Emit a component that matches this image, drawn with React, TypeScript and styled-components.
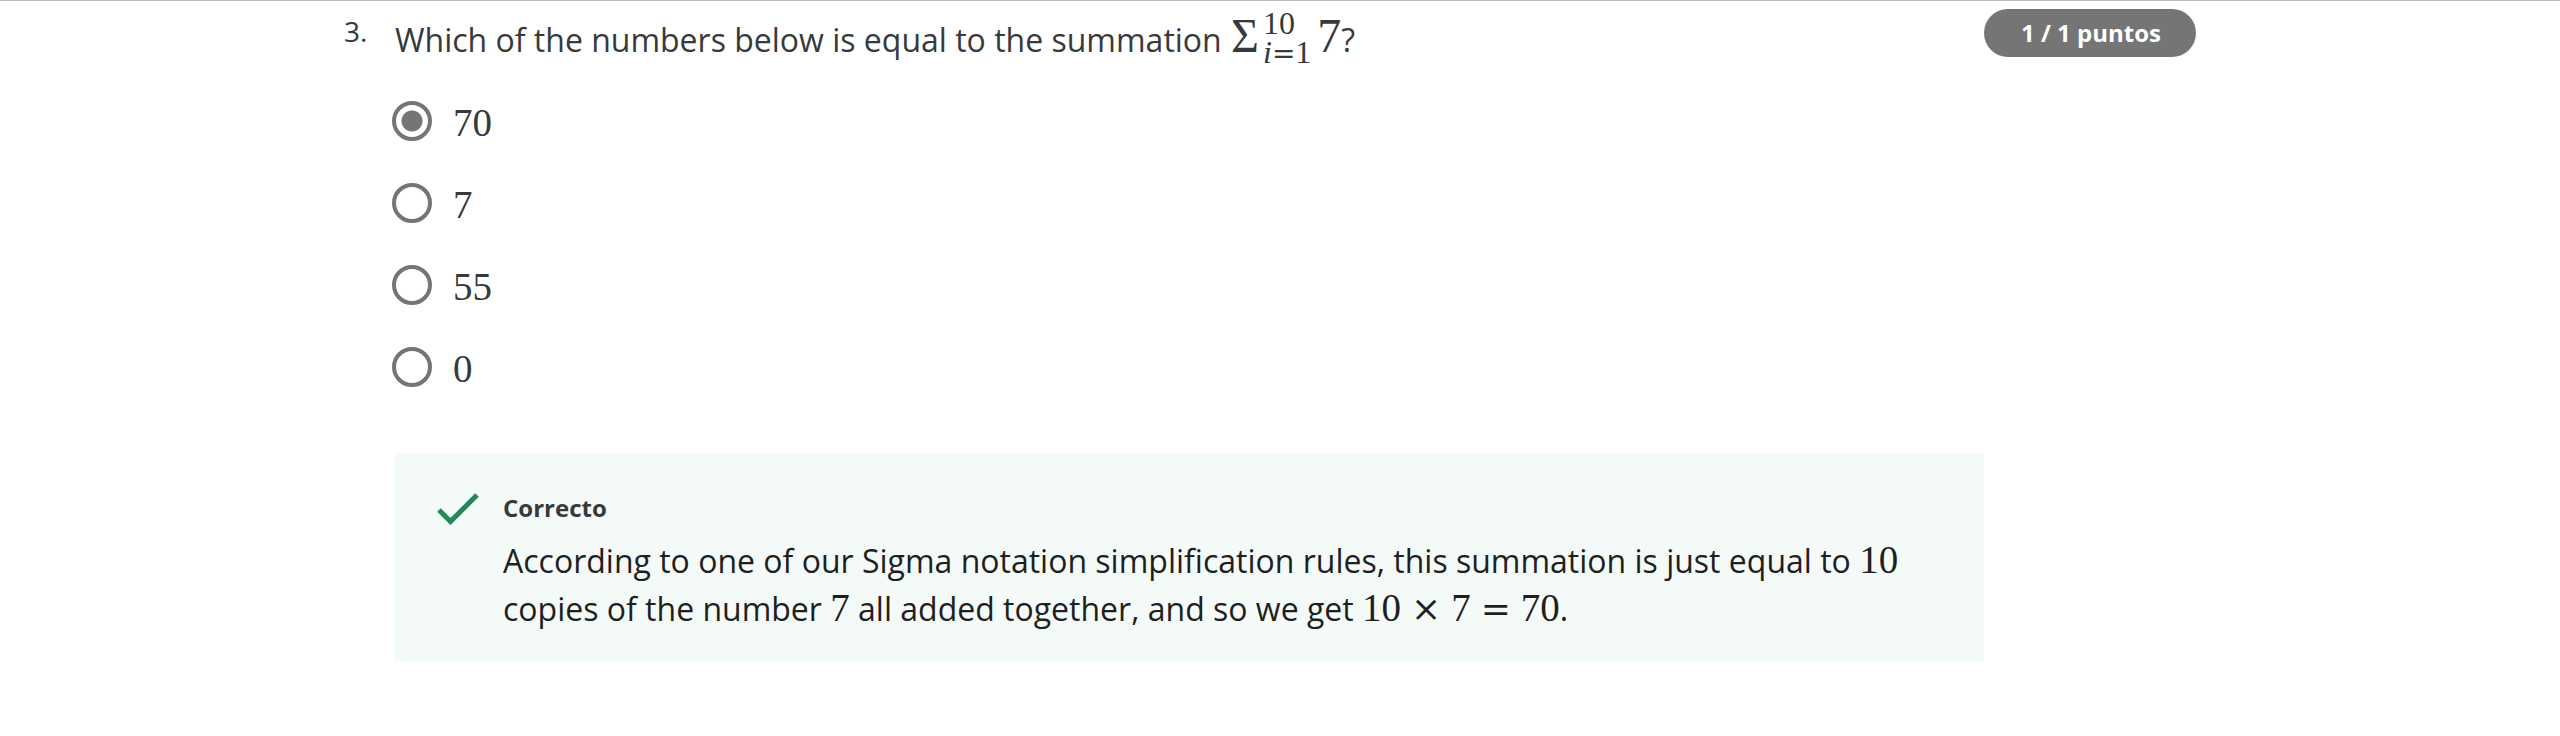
import React from "react";
import styled, { createGlobalStyle } from "styled-components";

const GlobalStyle = createGlobalStyle`
  * { box-sizing: border-box; }
  body {
    margin: 0;
    background: #fff;
    color: #373a3c;
    font-family: "Open Sans", sans-serif;
    font-size: 32px;
    line-height: 48px;
  }
`;

const Page = styled.main`
  display: flex;
  align-items: flex-start;
  border-top: 1px solid #bdbdbd;
  padding: 8px 364px 72px 344px;
`;

const QuestionNumber = styled.div`
  flex: 0 0 48px;
  font-size: 28px;
  line-height: 44px;
`;

const Fieldset = styled.fieldset`
  flex: 1;
  min-width: 0;
  margin: 0;
  padding: 0;
  border: 0;
`;

const Prompt = styled.legend`
  padding: 0 0 0 3px;
`;

const MathText = styled.span<{ $large?: boolean }>`
  font-family: "Liberation Serif", serif;
  font-size: ${(p) => (p.$large ? 48 : 39)}px;
  line-height: 0;
  white-space: nowrap;
  margin-left: ${(p) => (p.$large ? 1 : 0)}px;
`;

const Limits = styled.span`
  display: inline-flex;
  flex-direction: column;
  margin: 0 6px 0 4px;
  vertical-align: 18px;
  font-size: 32px;
  line-height: 29px;
`;

const Operator = styled.span<{ $small?: boolean }>`
  font-family: "DejaVu Serif", serif;
  font-size: ${(p) => (p.$small ? 28 : 36)}px;
  line-height: 0;
  margin: 0 ${(p) => (p.$small ? 0 : 10)}px;
`;

const Options = styled.div`
  display: flex;
  flex-direction: column;
  gap: 42px;
  padding-top: 34px;
`;

const Option = styled.label`
  display: flex;
  align-items: center;
  gap: 21px;
  height: 40px;
`;

const OptionValue = styled(MathText)`
  line-height: 40px;
  padding-top: 3px;
`;

const Radio = styled.input`
  appearance: none;
  width: 40px;
  height: 40px;
  margin: 0;
  border: 4px solid #757575;
  border-radius: 50%;
  background: #fff;
  &:checked {
    background: radial-gradient(circle, #757575 0 10px, #fff 11px);
  }
`;

const Feedback = styled.section`
  display: flex;
  gap: 24px;
  margin: 66px 0 0 2px;
  padding: 37px 44px 28px 43px;
  background: #f4faf8;
`;

const CheckIcon = styled.svg`
  flex: none;
  width: 42px;
  height: 32px;
  margin-top: 3px;
`;

const FeedbackTitle = styled.h2`
  margin: 0 0 11px;
  font-size: 24px;
  line-height: 36px;
  font-weight: 700;
`;

const FeedbackText = styled.p`
  margin: 0;
  color: #1f1f1f;
`;

const Score = styled.div`
  flex: none;
  padding: 0 35px 0 37px;
  border-radius: 24px;
  background: #757575;
  color: #fff;
  font-size: 24px;
  font-weight: 700;
`;

const answers = ["70", "7", "55", "0"];

export default function App() {
  return (
    <>
      <GlobalStyle />
      <Page>
        <QuestionNumber>3.</QuestionNumber>
        <Fieldset>
          <Prompt>
            Which of the numbers below is equal to the summation{" "}
            <MathText $large>
              Σ
              <Limits>
                <span>10</span>
                <span>
                  <i>i</i>
                  <Operator $small>=</Operator>1
                </span>
              </Limits>
              7
            </MathText>
            ?
          </Prompt>
          <Options>
            {answers.map((answer) => (
              <Option key={answer}>
                <Radio type="radio" name="answer" value={answer} defaultChecked={answer === "70"} />
                <OptionValue>{answer}</OptionValue>
              </Option>
            ))}
          </Options>
          <Feedback>
            <CheckIcon viewBox="0 0 42 32" aria-hidden="true">
              <path d="M2 17 13.500 28.500 40 2" fill="none" stroke="#268757" strokeWidth="5" />
            </CheckIcon>
            <div>
              <FeedbackTitle>Correcto</FeedbackTitle>
              <FeedbackText>
                According to one of our Sigma notation simplification rules, this summation is just equal to{" "}
                <MathText>10</MathText> copies of the number <MathText>7</MathText> all added together, and so we get{" "}
                <MathText>
                  10<Operator>×</Operator>7<Operator>=</Operator>70
                </MathText>
                .
              </FeedbackText>
            </div>
          </Feedback>
        </Fieldset>
        <Score>1 / 1 puntos</Score>
      </Page>
    </>
  );
}
